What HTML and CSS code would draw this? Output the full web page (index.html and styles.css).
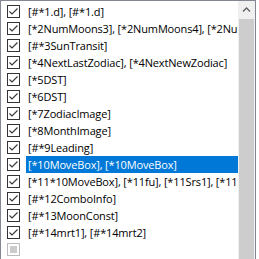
FILE: index.html
```html
<!DOCTYPE html>
<html>
<head>
    <title>Field List</title>
    <link rel="stylesheet" href="styles.css">
</head>
<body>
    <div class="listbox">
        <div class="items">
            <div class="row"><span class="check"><svg viewBox="0 0 11 11"><path d="M1.5 5.5 L4 8 L9.5 2.5"/></svg></span><span class="label">[#*1.d], [#*1.d]</span></div>
            <div class="row"><span class="check"><svg viewBox="0 0 11 11"><path d="M1.5 5.5 L4 8 L9.5 2.5"/></svg></span><span class="label">[*2NumMoons3], [*2NumMoons4], [*2NumMoons5]</span></div>
            <div class="row"><span class="check"><svg viewBox="0 0 11 11"><path d="M1.5 5.5 L4 8 L9.5 2.5"/></svg></span><span class="label">[#*3SunTransit]</span></div>
            <div class="row"><span class="check"><svg viewBox="0 0 11 11"><path d="M1.5 5.5 L4 8 L9.5 2.5"/></svg></span><span class="label">[*4NextLastZodiac], [*4NextNewZodiac]</span></div>
            <div class="row"><span class="check"><svg viewBox="0 0 11 11"><path d="M1.5 5.5 L4 8 L9.5 2.5"/></svg></span><span class="label">[*5DST]</span></div>
            <div class="row"><span class="check"><svg viewBox="0 0 11 11"><path d="M1.5 5.5 L4 8 L9.5 2.5"/></svg></span><span class="label">[*6DST]</span></div>
            <div class="row"><span class="check"><svg viewBox="0 0 11 11"><path d="M1.5 5.5 L4 8 L9.5 2.5"/></svg></span><span class="label">[*7ZodiacImage]</span></div>
            <div class="row"><span class="check"><svg viewBox="0 0 11 11"><path d="M1.5 5.5 L4 8 L9.5 2.5"/></svg></span><span class="label">[*8MonthImage]</span></div>
            <div class="row"><span class="check"><svg viewBox="0 0 11 11"><path d="M1.5 5.5 L4 8 L9.5 2.5"/></svg></span><span class="label">[#*9Leading]</span></div>
            <div class="row selected"><span class="check"><svg viewBox="0 0 11 11"><path d="M1.5 5.5 L4 8 L9.5 2.5"/></svg></span><span class="label">[*10MoveBox], [*10MoveBox]</span></div>
            <div class="row"><span class="check"><svg viewBox="0 0 11 11"><path d="M1.5 5.5 L4 8 L9.5 2.5"/></svg></span><span class="label">[*11*10MoveBox], [*11fu], [*11Srs1], [*11Srs2]</span></div>
            <div class="row"><span class="check"><svg viewBox="0 0 11 11"><path d="M1.5 5.5 L4 8 L9.5 2.5"/></svg></span><span class="label">[#*12ComboInfo]</span></div>
            <div class="row"><span class="check"><svg viewBox="0 0 11 11"><path d="M1.5 5.5 L4 8 L9.5 2.5"/></svg></span><span class="label">[#*13MoonConst]</span></div>
            <div class="row"><span class="check"><svg viewBox="0 0 11 11"><path d="M1.5 5.5 L4 8 L9.5 2.5"/></svg></span><span class="label">[#*14mrt1], [#*14mrt2]</span></div>
            <div class="row"><span class="check mixed"></span><span class="label"></span></div>
        </div>
        <div class="scrollbar">
            <div class="arrow">
                <svg width="17" height="17" viewBox="0 0 17 17"><path d="M5 10.5 L8.5 7 L12 10.5" fill="none" stroke="#606060" stroke-width="1.3"/></svg>
            </div>
            <div class="thumb"></div>
        </div>
    </div>
</body>
</html>
```
FILE: styles.css
```css
body {
    margin: 0;
    background: #fff;
    font-family: "Open Sans", "Noto Sans", sans-serif;
    font-size: 11px;
    letter-spacing: -0.15px;
    overflow: hidden;
}
.listbox {
    width: 256px;
    height: 300px;
    box-sizing: border-box;
    border: 1px solid #828790;
    border-bottom: none;
    display: flex;
}
.items {
    flex: 1;
    min-width: 0;
    overflow: hidden;
    padding-top: 2px;
}
.row {
    height: 17px;
    display: flex;
    align-items: center;
}
.check {
    flex: none;
    width: 13px;
    height: 13px;
    box-sizing: border-box;
    margin-left: 6px;
    margin-right: 6px;
    border: 1px solid #333;
    background: #fff;
    position: relative;
}
.check svg {
    display: block;
    width: 11px;
    height: 11px;
}
.check path {
    fill: none;
    stroke: #333;
    stroke-width: 1.1;
}
.check.mixed {
    border-color: #bcbcbc;
}
.check.mixed::after {
    content: "";
    position: absolute;
    left: 2px;
    top: 2px;
    width: 7px;
    height: 7px;
    background: #cccccc;
}
.label {
    flex: 1;
    min-width: 0;
    height: 17px;
    line-height: 17px;
    padding-left: 2px;
    white-space: nowrap;
    overflow: hidden;
    color: #000;
}
.row.selected .label {
    background: #0078d7;
    color: #fff;
}
.scrollbar {
    flex: none;
    width: 17px;
    background: #f0f0f0;
    display: flex;
    flex-direction: column;
}
.arrow {
    height: 17px;
    flex: none;
}
.arrow svg {
    display: block;
}
.thumb {
    flex: 1;
    margin: 1px 1px 0 1px;
    background: #cdcdcd;
}
```
